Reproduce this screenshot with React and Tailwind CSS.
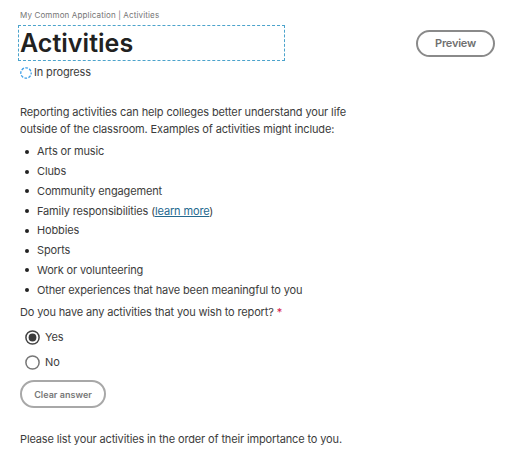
import clsx from 'clsx'

const EXAMPLES = [
  { text: 'Arts or music' },
  { text: 'Clubs' },
  { text: 'Community engagement' },
  { text: 'Family responsibilities', link: 'learn more' },
  { text: 'Hobbies' },
  { text: 'Sports' },
  { text: 'Work or volunteering' },
  { text: 'Other experiences that have been meaningful to you' },
]

const ProgressIcon = () => (
  <svg className="size-3 shrink-0" viewBox="0 0 12 12" fill="none" aria-hidden="true">
    <circle cx="6" cy="6" r="5.2" stroke="#3d9fe8" strokeWidth="1.3" strokeDasharray="2.7 1.384" strokeDashoffset="1.35" />
  </svg>
)

const RadioIcon = ({ checked }) => (
  <svg className="size-[15px] shrink-0" viewBox="0 0 15 15" fill="none" aria-hidden="true">
    <circle cx="7.5" cy="7.5" r="6.6" stroke={checked ? '#444' : '#777'} strokeWidth="1.5" />
    {checked && <circle cx="7.5" cy="7.5" r="3.9" fill="#3c3c3c" />}
  </svg>
)

const PillButton = ({ className, children }) => (
  <button
    type="button"
    className={clsx('flex items-center justify-center rounded-full font-semibold whitespace-nowrap', className)}
  >
    {children}
  </button>
)

const RadioOption = ({ label, checked }) => (
  <div role="radio" aria-checked={checked} className="flex h-[25px] items-center gap-[5px] pl-[5px]">
    <RadioIcon checked={checked} />
    <span>{label}</span>
  </div>
)

const App = () => (
  <main className="h-[460px] w-[512px] overflow-hidden bg-white pl-5 font-['Inter',sans-serif] text-[11px] leading-[17px] tracking-[-0.13px] text-[#3c3c3c]">
    <header className="flex h-[81px] items-start justify-between pr-[17px]">
      <div className="pt-[9px]">
        <nav className="h-[16px] text-[8px] leading-[13px] tracking-[0.14px] text-[#757575]">
          My Common Application | Activities
        </nav>
        <h1 className="-ml-[2px] flex h-[36px] w-[267px] items-center border border-dashed border-[#4ba3cc] pl-px text-[25px] font-semibold tracking-[0.03px] text-[#212121]">
          Activities
        </h1>
        <div className="flex h-[23px] items-center gap-[2px] tracking-[-0.15px]">
          <ProgressIcon />
          <span>In progress</span>
        </div>
      </div>
      <PillButton className="mt-[30px] h-[27px] w-[79px] border-2 border-[#8a8a8a] text-[11px] tracking-[-0.2px] text-[#707070]">
        Preview
      </PillButton>
    </header>

    <p className="mt-[23px]">
      Reporting activities can help colleges better understand your life
      <br />
      <span className="tracking-[-0.15px]">outside of the classroom. Examples of activities might include:</span>
    </p>

    <ul className="mt-[4px] tracking-[-0.14px]">
      {EXAMPLES.map(({ text, link }) => (
        <li key={text} className="flex h-[19.75px] items-center">
          <span className="ml-[4.5px] mr-[8.5px] size-[4px] rounded-full bg-[#222]" />
          <span>
            {text}
            {link && (
              <>
                {' ('}
                <a className="text-[#24698f] underline underline-offset-[1px]">{link}</a>)
              </>
            )}
          </span>
        </li>
      ))}
    </ul>

    <p className="mt-[4px] tracking-[-0.15px]">
      Do you have any activities that you wish to report? <span className="text-[#d6204b]">*</span>
    </p>
    <div role="radiogroup" className="mt-[4px]">
      <RadioOption label="Yes" checked />
      <RadioOption label="No" checked={false} />
    </div>
    <PillButton className="mt-[5px] h-[28px] w-[86px] border-2 border-[#a8a8a8] text-[9px] tracking-[0.03px] text-[#777]">
      Clear answer
    </PillButton>
    <p className="mt-[23px] tracking-[-0.14px]">
      Please list your activities in the order of their importance to you.
    </p>
  </main>
)

export default App
